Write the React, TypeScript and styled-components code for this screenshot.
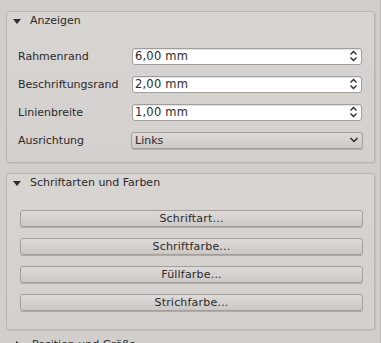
import React from 'react';
import styled, { createGlobalStyle } from 'styled-components';

const GlobalStyle = createGlobalStyle`
  html, body {
    margin: 0;
    padding: 0;
    background: #d2cecb;
    font-family: 'DejaVu Sans', 'Liberation Sans', sans-serif;
    font-size: 11px;
    color: #2a2a2a;
  }
`;

const Root = styled.div`
  width: 381px;
  height: 343px;
  overflow: hidden;
  box-sizing: border-box;
  padding: 11px 5px 0 6px;
  border-right: 1px solid #bdb9b5;
  display: flex;
  flex-direction: column;
`;

const Group = styled.section<{ $gap: number }>`
  flex-shrink: 0;
  border: 1px solid #b9b5b1;
  border-radius: 3px;
  background: linear-gradient(#d8d4d1, #d4d0cd);
  box-shadow: 1px 1px 0 #c4c0bc;
  margin-bottom: ${(p) => p.$gap}px;
`;

const Header = styled.div`
  flex-shrink: 0;
  height: 17px;
  display: flex;
  align-items: center;
  gap: 9px;
  padding-left: 6px;
`;

const Triangle = styled.span<{ $open: boolean }>`
  width: 0;
  height: 0;
  ${(p) =>
    p.$open
      ? `border-left: 4.5px solid transparent;
         border-right: 4.5px solid transparent;
         border-top: 5px solid #2e2e2e;
         margin-top: 1px;`
      : `border-top: 4.5px solid transparent;
         border-bottom: 4.5px solid transparent;
         border-left: 5px solid #2e2e2e;
         margin: 0 2px;`}
`;

const FormBody = styled.div`
  padding: 13px 12px 8px 11px;
  display: flex;
  flex-direction: column;
`;

const Row = styled.div`
  height: 28px;
  display: grid;
  grid-template-columns: 114px 1fr;
  align-items: center;
`;

const SpinBox = styled.div`
  height: 17px;
  box-sizing: border-box;
  border: 1px solid #a29e9a;
  border-radius: 3px;
  background: #fff;
  box-shadow: inset 0 1px 1px rgba(0, 0, 0, 0.12);
  display: flex;
  align-items: center;
  justify-content: space-between;
  padding: 0 3px 0 2px;
  font-size: 11.5px;
  letter-spacing: 0.2px;
`;

const Combo = styled.div`
  height: 17px;
  box-sizing: border-box;
  border: 1px solid #a29e9a;
  border-radius: 3px;
  background: linear-gradient(#dcd9d6, #cdc9c6);
  box-shadow: 0 1px 0 #b0aca8;
  display: flex;
  align-items: center;
  justify-content: space-between;
  padding: 0 3px 0 3px;
  margin-right: -1px;
  margin-left: -1px;
`;

const ButtonBody = styled.div`
  padding: 19px 11px 18px 13px;
  display: flex;
  flex-direction: column;
  gap: 11px;
`;

const PushButton = styled.div`
  height: 17px;
  box-sizing: border-box;
  border: 1px solid #a29e9a;
  border-radius: 3px;
  background: linear-gradient(#dddad7, #ccc8c5);
  box-shadow: 0 1px 0 #aeaaa6;
  display: flex;
  align-items: center;
  justify-content: center;
  letter-spacing: 0.2px;
`;

const Collapsed = styled(Header)`
  margin-top: 6px;
  padding-left: 8px;
`;

const SpinIcon = () => (
  <svg width="9" height="12" viewBox="0 0 9 12">
    <path d="M1.5 4.5 L4.5 1.5 L7.5 4.5 M1.5 7.5 L4.5 10.5 L7.5 7.5" fill="none" stroke="#2e2e2e" strokeWidth="1.4" />
  </svg>
);

const ChevronIcon = () => (
  <svg width="10" height="8" viewBox="0 0 10 8">
    <path d="M1.5 2 L5 5.5 L8.5 2" fill="none" stroke="#2e2e2e" strokeWidth="1.5" />
  </svg>
);

const spins = [
  { label: 'Rahmenrand', value: '6,00 mm' },
  { label: 'Beschriftungsrand', value: '2,00 mm' },
  { label: 'Linienbreite', value: '1,00 mm' },
];

const buttons = ['Schriftart...', 'Schriftfarbe...', 'Füllfarbe...', 'Strichfarbe...'];

export default function App() {
  return (
    <>
      <GlobalStyle />
      <Root>
        <Group $gap={10}>
          <Header>
            <Triangle $open />
            <span>Anzeigen</span>
          </Header>
          <FormBody>
            {spins.map((s) => (
              <Row key={s.label}>
                <span>{s.label}</span>
                <SpinBox>
                  <span>{s.value}</span>
                  <SpinIcon />
                </SpinBox>
              </Row>
            ))}
            <Row>
              <span>Ausrichtung</span>
              <Combo>
                <span>Links</span>
                <ChevronIcon />
              </Combo>
            </Row>
          </FormBody>
        </Group>
        <Group $gap={0}>
          <Header>
            <Triangle $open />
            <span>Schriftarten und Farben</span>
          </Header>
          <ButtonBody>
            {buttons.map((b) => (
              <PushButton key={b}>{b}</PushButton>
            ))}
          </ButtonBody>
        </Group>
        <Collapsed>
          <Triangle $open={false} />
          <span>Position und Größe</span>
        </Collapsed>
      </Root>
    </>
  );
}
